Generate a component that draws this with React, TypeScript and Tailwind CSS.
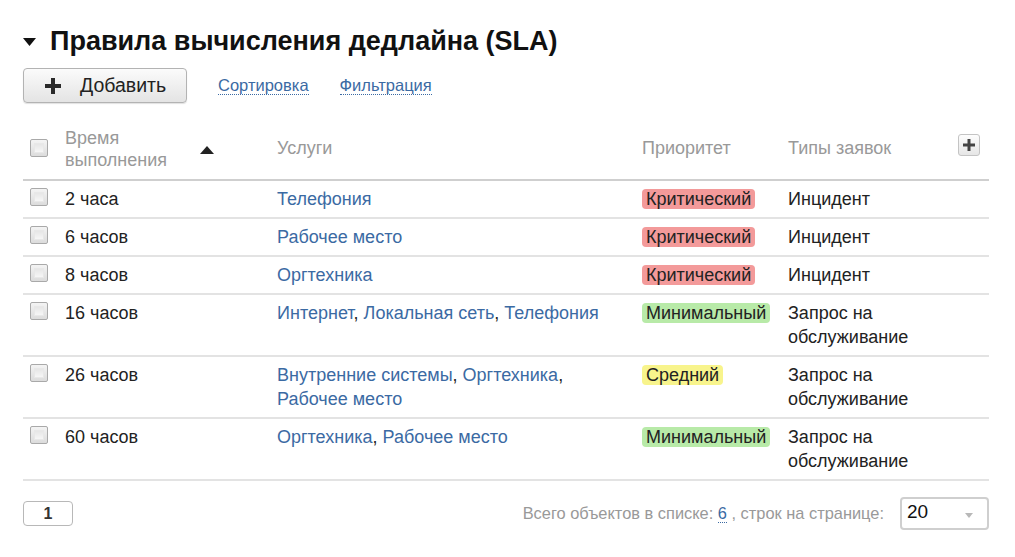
import React from 'react';

type Row = {
  time: string;
  services: string[];
  priority: 'crit' | 'min' | 'mid';
  type: string;
};

const rows: Row[] = [
  { time: '2 часа', services: ['Телефония'], priority: 'crit', type: 'Инцидент' },
  { time: '6 часов', services: ['Рабочее место'], priority: 'crit', type: 'Инцидент' },
  { time: '8 часов', services: ['Оргтехника'], priority: 'crit', type: 'Инцидент' },
  { time: '16 часов', services: ['Интернет', 'Локальная сеть', 'Телефония'], priority: 'min', type: 'Запрос на обслуживание' },
  { time: '26 часов', services: ['Внутренние системы', 'Оргтехника', 'Рабочее место'], priority: 'mid', type: 'Запрос на обслуживание' },
  { time: '60 часов', services: ['Оргтехника', 'Рабочее место'], priority: 'min', type: 'Запрос на обслуживание' },
];

const badges = {
  crit: { label: 'Критический', cls: 'bg-[#f39a9a]' },
  min: { label: 'Минимальный', cls: 'bg-[#b8eaa8]' },
  mid: { label: 'Средний', cls: 'bg-[#f8f48c]' },
};

const Checkbox: React.FC = () => (
  <span className="block w-[18px] h-[18px] border border-[#a9a9a9] rounded-[2px] bg-gradient-to-b from-[#f4f4f4] to-[#dcdcdc] p-[3px]">
    <span className="block w-full h-full border border-[#e8e8e8] bg-gradient-to-b from-[#e6e6e6] to-[#f6f6f6]" />
  </span>
);

const PlusIcon: React.FC<{ size: number; color: string }> = ({ size, color }) => (
  <svg width={size} height={size} viewBox="0 0 16 16">
    <path d="M6 0h4v6h6v4h-6v6H6v-6H0V6h6z" fill={color} />
  </svg>
);

export default function App() {
  return (
    <div className="w-[1015px] h-[557px] bg-white px-[23px] pt-[26px] text-[#222] font-['Liberation_Sans',Arial,sans-serif] overflow-hidden">
      <div className="flex items-center h-[30px]">
        <svg width="13" height="8" viewBox="0 0 13 8" className="mr-[14px] mt-[1px]">
          <path d="M0 0h13L6.5 8z" fill="#111" />
        </svg>
        <h1 className="text-[27px] font-bold leading-[30px] text-[#111]">Правила вычисления дедлайна (SLA)</h1>
      </div>

      <div className="flex items-center mt-[12px] h-[35px]">
        <button className="flex items-center h-[35px] w-[164px] pl-[21px] border border-[#b3b3b3] rounded-[4px] bg-gradient-to-b from-[#fbfbfb] to-[#e4e4e4] shadow-[0_1px_1px_rgba(0,0,0,0.12)]">
          <PlusIcon size={16} color="#2a2a2a" />
          <span className="ml-[19px] text-[19.5px] text-[#222]">Добавить</span>
        </button>
        <a className="ml-[31px] text-[16.5px] text-[#3b6aa3] border-b border-dotted border-[#3b6aa3] leading-[18px]">Сортировка</a>
        <a className="ml-[31px] text-[16.5px] text-[#3b6aa3] border-b border-dotted border-[#3b6aa3] leading-[18px]">Фильтрация</a>
      </div>

      <div className="mt-[21px] w-[966px]">
        <div className="grid grid-cols-[42px_212px_365px_146px_1fr] h-[57px] border-b-2 border-[#cfcfcf] text-[18px] text-[#999] leading-[22px]">
          <div className="pl-[7px] pt-[15px]"><Checkbox /></div>
          <div className="flex items-start pt-[3px]">
            <span className="w-[135px]">Время выполнения</span>
            <svg width="14" height="8" viewBox="0 0 14 8" className="mt-[19px]">
              <path d="M0 8h14L7 0z" fill="#222" />
            </svg>
          </div>
          <div className="pt-[13px]">Услуги</div>
          <div className="pt-[13px]">Приоритет</div>
          <div className="flex justify-between pt-[13px]">
            <span>Типы заявок</span>
            <span className="mr-[9px] -mt-[3px] flex items-center justify-center w-[22px] h-[22px] border border-[#c4c4c4] rounded-[3px] bg-gradient-to-b from-[#fdfdfd] to-[#e6e6e6]">
              <PlusIcon size={12} color="#444" />
            </span>
          </div>
        </div>

        {rows.map((r) => (
          <div key={r.time} className="grid grid-cols-[42px_212px_365px_146px_1fr] py-[6px] border-b-2 border-[#e3e3e3] text-[18px] leading-[24px]">
            <div className="pl-[7px] pt-[1px]"><Checkbox /></div>
            <div>{r.time}</div>
            <div className="pr-[30px]">
              {r.services.map((s, i) => (
                <React.Fragment key={s}>
                  <span className="text-[#3b6aa3]">{s}</span>
                  {i < r.services.length - 1 && <span>, </span>}
                </React.Fragment>
              ))}
            </div>
            <div>
              <span className={`inline-block px-[4px] rounded-[4px] leading-[20px] ${badges[r.priority].cls}`}>
                {badges[r.priority].label}
              </span>
            </div>
            <div className="pr-[60px]">{r.type}</div>
          </div>
        ))}

        <div className="flex items-center justify-between mt-[16px]">
          <button className="w-[50px] h-[25px] border border-[#b8b8b8] rounded-[4px] text-[16px] font-bold text-[#333] leading-[22px] bg-white">1</button>
          <div className="flex items-center">
            <span className="text-[16.4px] text-[#999]">
              Всего объектов в списке: <span className="text-[#3b6aa3] border-b border-dotted border-[#3b6aa3]">6</span> , строк на странице:
            </span>
            <div className="ml-[16px] flex items-center justify-between w-[89px] h-[33px] pl-[5px] pr-[14px] border-2 border-[#cfcfcf] rounded-[4px] bg-white">
              <span className="text-[19px] text-[#111] leading-[22px] -mt-[4px]">20</span>
              <svg width="8" height="5" viewBox="0 0 8 5" className="mt-[4px]">
                <path d="M0 0h8L4 5z" fill="#b8b8b8" />
              </svg>
            </div>
          </div>
        </div>
      </div>
    </div>
  );
}
